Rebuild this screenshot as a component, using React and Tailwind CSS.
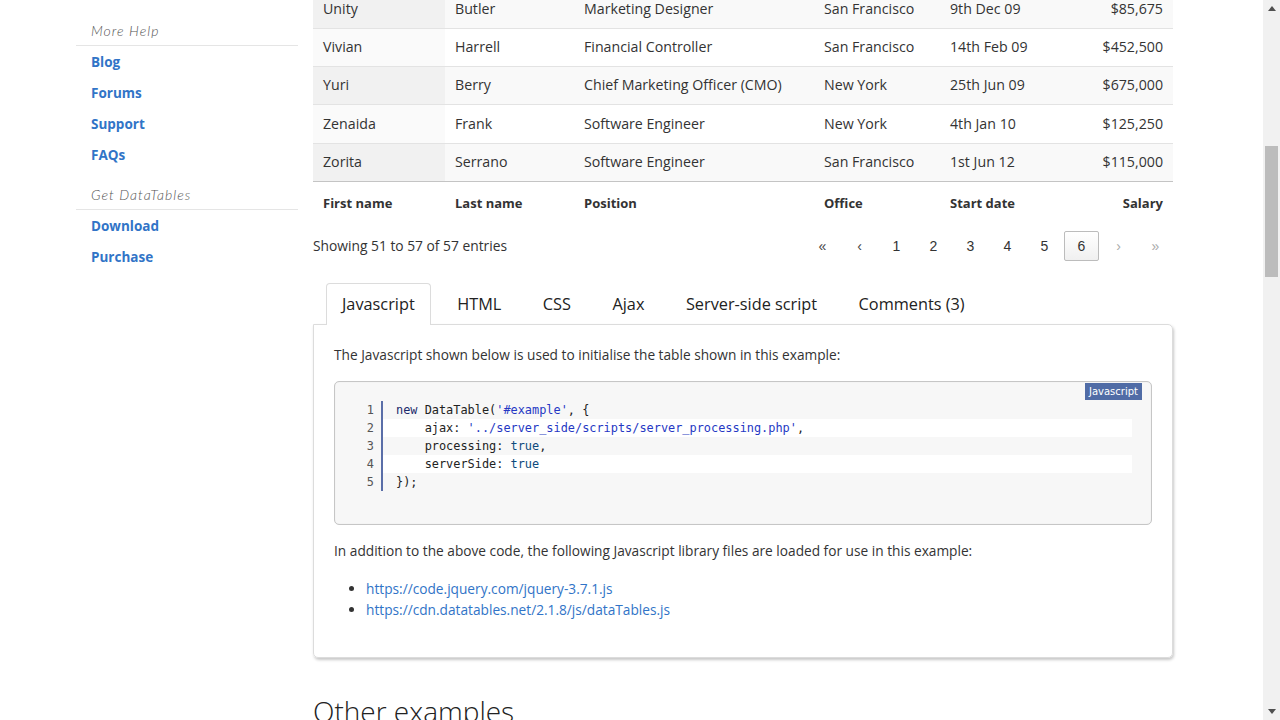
import React from 'react';

const rows = [
  ['Unity', 'Butler', 'Marketing Designer', 'San Francisco', '9th Dec 09', '$85,675'],
  ['Vivian', 'Harrell', 'Financial Controller', 'San Francisco', '14th Feb 09', '$452,500'],
  ['Yuri', 'Berry', 'Chief Marketing Officer (CMO)', 'New York', '25th Jun 09', '$675,000'],
  ['Zenaida', 'Frank', 'Software Engineer', 'New York', '4th Jan 10', '$125,250'],
  ['Zorita', 'Serrano', 'Software Engineer', 'San Francisco', '1st Jun 12', '$115,000'],
];

const tabs = ['Javascript', 'HTML', 'CSS', 'Ajax', 'Server-side script', 'Comments (3)'];

const pages = [
  { label: '«', cls: 'text-[#444]' },
  { label: '‹', cls: 'text-[#444]' },
  { label: '1' },
  { label: '2' },
  { label: '3' },
  { label: '4' },
  { label: '5' },
  { label: '6', active: true },
  { label: '›', cls: 'text-[#aaa]' },
  { label: '»', cls: 'text-[#aaa]' },
];

const SideHeader = ({ children, className }) => (
  <div className={`pl-[15px] border-b border-[#e5e5e5] h-[25px] leading-[18px] ${className}`}>
    <span className="italic font-light tracking-[1px] text-[14px] text-[#555]" style={{ fontFamily: 'Lato, sans-serif' }}>
      {children}
    </span>
  </div>
);

const SideLink = ({ children }) => (
  <a className="flex items-center h-[31px] pl-[15px] font-bold text-[13.5px] text-[#3174c7]">{children}</a>
);

const Kw = ({ children }) => <span className="text-[#1b2a6b]">{children}</span>;
const Str = ({ children }) => <span className="text-[#2538c4]">{children}</span>;
const Lit = ({ children }) => <span className="text-[#0d4a7d]">{children}</span>;

const codeLines = [
  <><Kw>new</Kw> DataTable(<Str>'#example'</Str>, {'{'}</>,
  <>{'    '}ajax: <Str>'../server_side/scripts/server_processing.php'</Str>,</>,
  <>{'    '}processing: <Lit>true</Lit>,</>,
  <>{'    '}serverSide: <Lit>true</Lit></>,
  <>{'}'});</>,
];

const App = () => {
  return (
    <div className="flex w-[1280px] h-[720px] overflow-hidden bg-white text-[#333]" style={{ fontFamily: '"Open Sans", sans-serif' }}>
      <div className="flex flex-1">
        {/* sidebar */}
        <div className="ml-[76px] w-[222px] shrink-0">
          <SideHeader className="mt-[21px]">More Help</SideHeader>
          <div className="pt-[1px]">
            <SideLink>Blog</SideLink>
            <SideLink>Forums</SideLink>
            <SideLink>Support</SideLink>
            <SideLink>FAQs</SideLink>
          </div>
          <SideHeader className="mt-[14px]">Get DataTables</SideHeader>
          <div className="pt-[1px]">
            <SideLink>Download</SideLink>
            <SideLink>Purchase</SideLink>
          </div>
        </div>

        {/* main */}
        <div className="ml-[15px] w-[860px] shrink-0">
          <table className="w-full table-fixed border-collapse -mt-[10px] text-[14.2px]">
            <colgroup>
              <col className="w-[132px]" />
              <col className="w-[129px]" />
              <col className="w-[240px]" />
              <col className="w-[126px]" />
              <col className="w-[113px]" />
              <col className="w-[120px]" />
            </colgroup>
            <tbody className="border-b border-[#c4c4c4]">
              {rows.map((r, i) => {
                const odd = i % 2 === 0;
                return (
                  <tr key={r[0]} className={`${i === 3 ? 'h-[39px]' : 'h-[38px]'} border-t border-[#e3e3e3] ${odd ? 'bg-[#f9f9f9]' : 'bg-white'}`}>
                    {r.map((c, j) => (
                      <td
                        key={j}
                        className={`px-[10px] pt-0 pb-[1px] ${j === 5 ? 'text-right' : 'text-left'} ${j === 0 ? (odd ? 'bg-[#f1f1f1]' : 'bg-[#fafafa]') : ''}`}
                      >
                        {c}
                      </td>
                    ))}
                  </tr>
                );
              })}
            </tbody>
            <tfoot>
              <tr>
                {['First name', 'Last name', 'Position', 'Office', 'Start date', 'Salary'].map((h, j) => (
                  <th key={h} className={`px-[10px] py-[11px] leading-[20px] text-[13px] font-bold ${j === 5 ? 'text-right' : 'text-left'}`}>
                    {h}
                  </th>
                ))}
              </tr>
            </tfoot>
          </table>

          <div className="flex items-center justify-between mt-[7px] h-[30px]">
            <div className="text-[13.8px] pt-[1px]">Showing 51 to 57 of 57 entries</div>
            <div className="flex gap-[2px]" style={{ fontFamily: '"Liberation Sans", Arial, sans-serif' }}>
              {pages.map((p) => (
                <div
                  key={p.label}
                  className={`w-[35px] h-[30px] flex items-center justify-center text-[14px] rounded-[2px] ${
                    p.active ? 'border border-[#bcbcbc] bg-gradient-to-b from-white to-[#f0f0f0] text-[#333]' : p.cls || 'text-[#333]'
                  }`}
                >
                  {p.label}
                </div>
              ))}
            </div>
          </div>

          {/* tabs */}
          <div className="flex mt-[22px] pl-[13px] gap-[11.5px] relative z-10">
            {tabs.map((t, i) => (
              <div
                key={t}
                className={`h-[42px] px-[15px] flex items-center text-[16.3px] text-[#222] ${
                  i === 0 ? 'border border-b-0 border-[#dcdcdc] rounded-t-[4px] bg-white' : ''
                }`}
              >
                {t}
              </div>
            ))}
          </div>
          <div className="-mt-[1px] border border-[#dcdcdc] rounded-[5px] rounded-tl-none shadow-[1px_2px_3px_rgba(0,0,0,0.22)] px-[20px] pt-[20px] pb-[37px] text-[13.7px]">
            <p className="leading-[20px]">The Javascript shown below is used to initialise the table shown in this example:</p>

            <div className="relative mt-[16px] border border-[#c6c6c6] rounded-[5px] bg-[#f7f7f7] pt-[19px] pb-[33px] pr-[19px] shadow-[inset_0_0_1px_rgba(0,0,0,0.15)]">
              <div
                className="absolute top-[1px] right-[9px] h-[17px] px-[4px] bg-[#506ca6] text-white text-[10px] leading-[17px]"
                style={{ fontFamily: '"DejaVu Sans", Verdana, sans-serif' }}
              >
                Javascript
              </div>
              <div style={{ fontFamily: '"DejaVu Sans Mono", "Liberation Mono", monospace' }} className="text-[11.9px] text-[#222]">
                {codeLines.map((l, i) => (
                  <div key={i} className="flex h-[18px] leading-[18px]">
                    <div className="w-[46px] shrink-0 text-right pr-[7px] text-[#555]">{i + 1}</div>
                    <div className={`flex-1 border-l-2 border-[#5a6ea8] pl-[13px] whitespace-pre ${i % 2 === 1 ? 'bg-white' : ''}`}>
                      {l}
                    </div>
                  </div>
                ))}
              </div>
            </div>

            <p className="mt-[16px] leading-[20px]">
              In addition to the above code, the following Javascript library files are loaded for use in this example:
            </p>
            <ul className="list-disc pl-[32px] mt-[17px] leading-[21px] marker:text-[#333]">
              <li><a className="text-[#3174c7]">https://code.jquery.com/jquery-3.7.1.js</a></li>
              <li><a className="text-[#3174c7]">https://cdn.datatables.net/2.1.8/js/dataTables.js</a></li>
            </ul>
          </div>

          <h2 className="mt-[35px] text-[28px] font-light leading-[36px] text-[#222]">Other examples</h2>
        </div>
      </div>

      {/* scrollbar */}
      <div className="w-[17px] shrink-0 bg-[#f1f1f1] flex flex-col items-center">
        <div className="h-[17px] flex items-center justify-center">
          <svg width="8" height="5" viewBox="0 0 8 5"><path d="M4 0 L8 5 L0 5 Z" fill="#505050" /></svg>
        </div>
        <div className="mt-[129px] w-[13px] h-[131px] bg-[#bcbcbc]" />
        <div className="flex-1" />
        <div className="h-[17px] flex items-center justify-center">
          <svg width="8" height="5" viewBox="0 0 8 5"><path d="M0 0 L8 0 L4 5 Z" fill="#505050" /></svg>
        </div>
      </div>
    </div>
  );
};

export default App;
